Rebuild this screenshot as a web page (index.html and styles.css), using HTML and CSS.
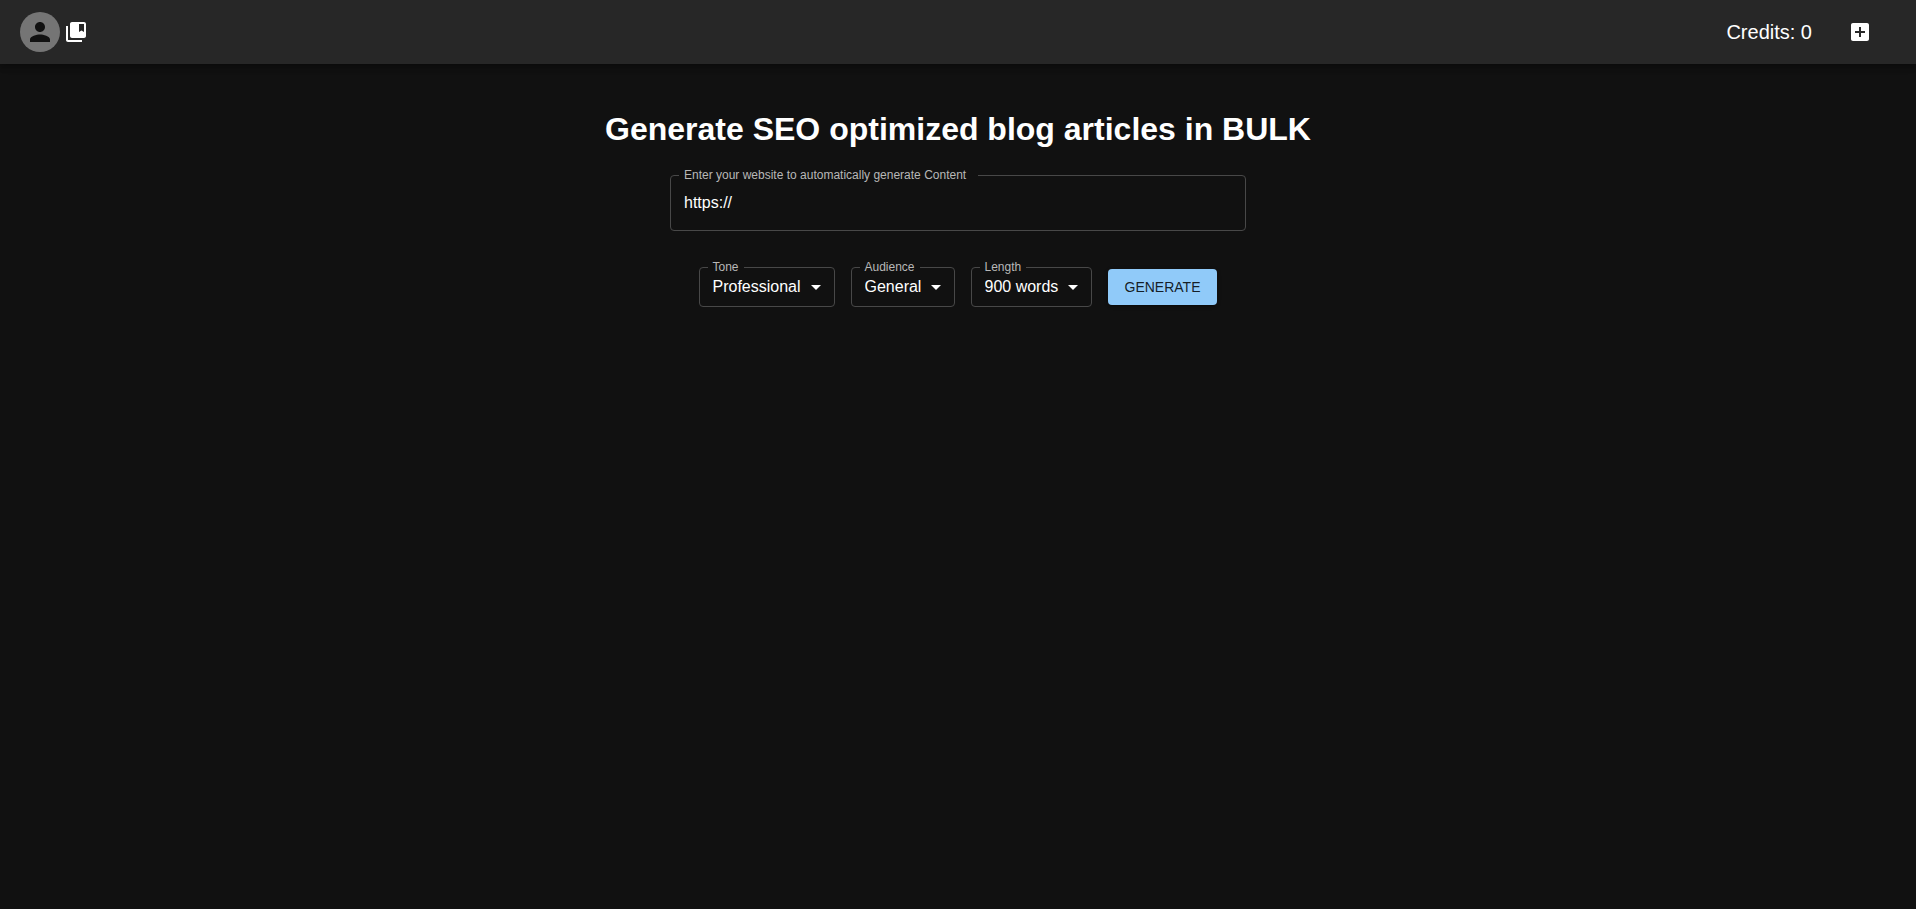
FILE: index.html
```html
<!DOCTYPE html>
<html lang="en">
<head>
    <meta charset="UTF-8">
    <meta name="viewport" content="width=device-width, initial-scale=1.0">
    <title>Bulk Article Generator</title>
    <link rel="stylesheet" href="styles.css">
</head>
<body>

<header class="app-bar">
    <div class="bar-left">
        <button class="avatar" type="button" aria-label="Account">
            <svg class="avatar-icon" viewBox="0 0 24 24"><path d="M12 12c2.21 0 4-1.79 4-4s-1.79-4-4-4-4 1.79-4 4 1.79 4 4 4zm0 2c-2.67 0-8 1.34-8 4v2h16v-2c0-2.66-5.33-4-8-4z"/></svg>
        </button>
        <button class="icon-button" type="button" aria-label="Saved articles">
            <svg class="icon" viewBox="0 0 24 24"><path d="M4 6H2v14c0 1.1.9 2 2 2h14v-2H4V6zm16-4H8c-1.1 0-2 .9-2 2v12c0 1.1.9 2 2 2h12c1.1 0 2-.9 2-2V4c0-1.1-.9-2-2-2zm0 10-2.5-1.5L15 12V4h5v8z"/></svg>
        </button>
    </div>
    <div class="bar-right">
        <span class="credits">Credits: 0</span>
        <button class="icon-button" type="button" aria-label="Add credits">
            <svg class="icon" viewBox="0 0 24 24"><path d="M19 3H5c-1.11 0-2 .9-2 2v14c0 1.1.89 2 2 2h14c1.1 0 2-.9 2-2V5c0-1.1-.9-2-2-2zm-2 10h-4v4h-2v-4H7v-2h4V7h2v4h4v2z"/></svg>
        </button>
    </div>
</header>

<main class="container">
    <h1>Generate SEO optimized blog articles in BULK</h1>

    <form class="generate-form">
        <div class="field website">
            <label for="website">Enter your website to automatically generate Content</label>
            <input type="text" id="website" value="https://">
        </div>

        <div class="options">
            <div class="field">
                <label for="tone">Tone</label>
                <select id="tone">
                    <option>Professional</option>
                    <option>Friendly</option>
                    <option>Casual</option>
                </select>
                <svg class="arrow" viewBox="0 0 24 24"><path d="m7 10 5 5 5-5z"/></svg>
            </div>
            <div class="field">
                <label for="audience">Audience</label>
                <select id="audience">
                    <option>General</option>
                    <option>Experts</option>
                </select>
                <svg class="arrow" viewBox="0 0 24 24"><path d="m7 10 5 5 5-5z"/></svg>
            </div>
            <div class="field">
                <label for="length">Length</label>
                <select id="length">
                    <option>900 words</option>
                    <option>600 words</option>
                </select>
                <svg class="arrow" viewBox="0 0 24 24"><path d="m7 10 5 5 5-5z"/></svg>
            </div>
            <button class="generate" type="button">GENERATE</button>
        </div>
    </form>
</main>

</body>
</html>
```

FILE: styles.css
```css
* {
    box-sizing: border-box;
}
body {
    margin: 0;
    background-color: #111;
    color: #fff;
    font-family: Arial, "Liberation Sans", sans-serif;
    font-size: 16px;
}
button, input, select {
    font-family: inherit;
    font-size: 16px;
    color: inherit;
}
button {
    padding: 0;
    border: none;
    cursor: pointer;
}

/* top bar */
.app-bar {
    display: flex;
    justify-content: space-between;
    align-items: center;
    height: 64px;
    padding: 0 44px 0 20px;
    background-color: #272727;
    box-shadow: 0 2px 4px -1px rgba(0, 0, 0, 0.2), 0 4px 5px rgba(0, 0, 0, 0.14), 0 1px 10px rgba(0, 0, 0, 0.12);
}
.bar-left, .bar-right {
    display: flex;
    align-items: center;
}
.bar-left {
    gap: 4px;
}
.bar-right {
    gap: 36px;
}
.avatar {
    display: flex;
    align-items: center;
    justify-content: center;
    width: 40px;
    height: 40px;
    border-radius: 50%;
    background-color: #757575;
}
.avatar-icon {
    width: 30px;
    height: 30px;
    fill: #111;
}
.icon-button {
    display: flex;
    background: none;
}
.icon {
    width: 24px;
    height: 24px;
    fill: #fff;
}
.credits {
    font-size: 20px;
    line-height: 32px;
}

/* form */
.container {
    display: flex;
    flex-direction: column;
    align-items: center;
    padding: 44px 16px;
}
h1 {
    margin: 0 0 25px;
    font-size: 32px;
    line-height: 42px;
    text-align: center;
}
.generate-form {
    display: flex;
    flex-direction: column;
    align-items: center;
    gap: 36px;
    width: 100%;
    max-width: 576px;
}
.field {
    position: relative;
}
.website {
    width: 100%;
}
/* label sits on the outline */
.field label {
    position: absolute;
    top: -8px;
    left: 9px;
    padding: 0 5px;
    background-color: #111;
    color: #b8b8b8;
    font-size: 12px;
    line-height: 16px;
    white-space: nowrap;
}
.website label {
    padding-right: 12px;
}
.field input, .field select {
    display: block;
    border: 1px solid #484848;
    border-radius: 4px;
    background: transparent;
}
.field input {
    width: 100%;
    height: 56px;
    padding: 0 13px;
}
.field select {
    height: 40px;
    padding: 0 32px 2px 13px;
    appearance: none;
}
.field option {
    background-color: #272727;
}
.arrow {
    position: absolute;
    top: 8px;
    right: 7px;
    width: 24px;
    height: 24px;
    fill: #fff;
    pointer-events: none;
}
.options {
    display: flex;
    flex-wrap: wrap;
    justify-content: center;
    align-items: center;
    gap: 16px;
}
.generate {
    height: 36px;
    padding: 0 17px;
    border-radius: 4px;
    background-color: #90caf9;
    color: rgba(0, 0, 0, 0.87);
    font-size: 14px;
    box-shadow: 0 3px 1px -2px rgba(0, 0, 0, 0.2), 0 2px 2px rgba(0, 0, 0, 0.14), 0 1px 5px rgba(0, 0, 0, 0.12);
}
```
